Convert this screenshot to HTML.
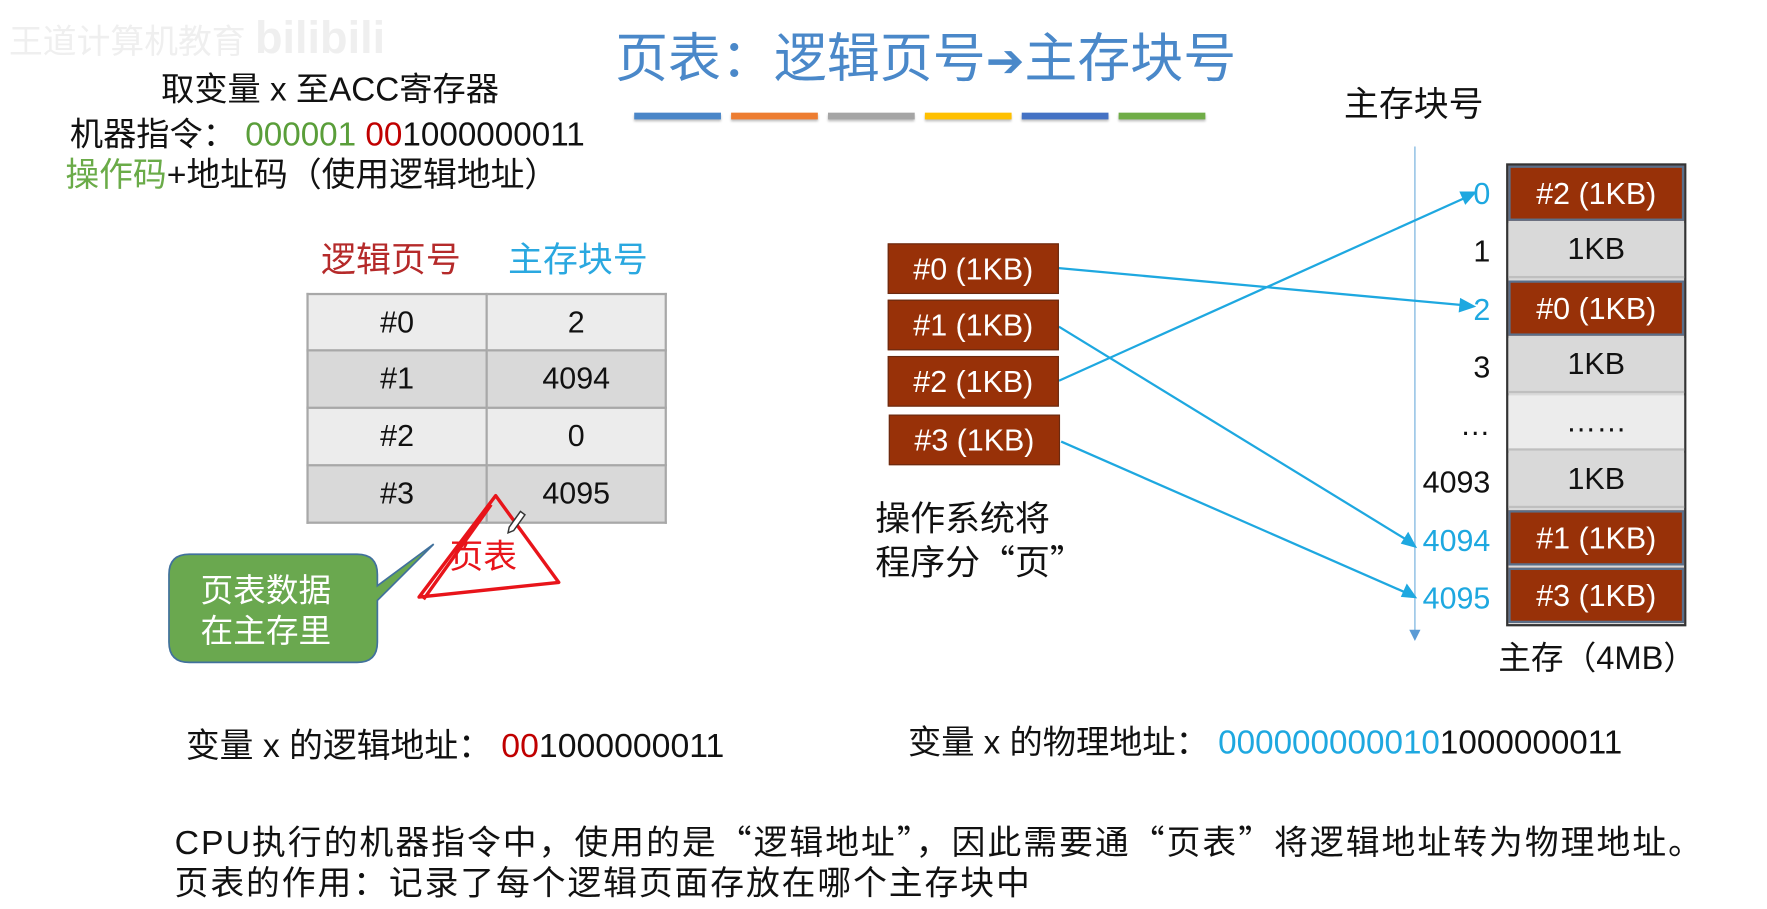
<!DOCTYPE html>
<html><head><meta charset="utf-8">
<style>
html,body{margin:0;padding:0;background:#fff;overflow:hidden;width:1767px;height:909px}
#s{position:absolute;left:0;top:0;width:1569px;height:807px;transform:scale(1.1265);transform-origin:0 0;font-family:"Liberation Sans","Noto Sans CJK SC",sans-serif;color:#111}
.t{position:absolute;white-space:nowrap;line-height:1}
.q{font-family:"Noto Sans CJK SC",sans-serif}
.bar{position:absolute;top:100px;height:6px;width:77px;box-shadow:0 2px 2px rgba(0,0,0,.25)}
.pg{position:absolute;left:788px;width:152px;height:45px;background:#983108;border:1px solid #6a2a10;color:#fff;font-size:27px;text-align:center;line-height:45px;box-sizing:border-box}
.cell{position:absolute;left:1339px;width:156px;height:49px;box-sizing:border-box;text-align:center;line-height:47px;font-size:27px}
.red{background:#983108;color:#fff;border:2px solid #5a6f8a}
.gry{background:#d9d9d9;border-bottom:2px solid #bfbfbf}
.lab{position:absolute;width:80px;left:1243px;text-align:right;font-size:27px;line-height:1}
.tb{position:absolute;left:272px;top:260px;border-collapse:collapse;font-size:27px}
.tb td{border:2px solid #a8a8a8;text-align:center;padding:0}
</style></head><body><div id="s">
<div class="t" style="left:8px;top:14px;font-size:30px;color:#efefef">王道计算机教育 <span style="font-size:40px;font-weight:bold">bilibili</span></div>
<div class="t" style="left:546px;top:28px;font-size:47px;color:#4a88c9">页表：逻辑页号<span style="font-family:'DejaVu Sans';font-size:41px">➔</span>主存块号</div>
<div class="bar" style="left:563px;background:#4a86c8"></div>
<div class="bar" style="left:649px;background:#ed7d31"></div>
<div class="bar" style="left:735px;background:#a5a5a5"></div>
<div class="bar" style="left:821px;background:#ffc000"></div>
<div class="bar" style="left:907px;background:#4472c4"></div>
<div class="bar" style="left:993px;background:#70ad47"></div>

<div class="t" style="left:143px;top:65px;font-size:29.5px">取变量 x 至ACC寄存器</div>
<div class="t" style="left:62px;top:105px;font-size:29.5px">机器指令： <span style="color:#5a9e3a">000001</span> <span style="color:#c00000">00</span>1000000011</div>
<div class="t" style="left:58px;top:141px;font-size:30px"><span style="color:#6aab48">操作码</span>+地址码（使用逻辑地址）</div>

<div class="t" style="left:285px;top:215px;font-size:31px;color:#b52a2a">逻辑页号</div>
<div class="t" style="left:451px;top:215px;font-size:31px;color:#2aa8e0">主存块号</div>
<table class="tb">
<tr style="height:50px;background:#ececec"><td style="width:157px">#0</td><td style="width:157px">2</td></tr>
<tr style="height:51px;background:#d9d9d9"><td>#1</td><td>4094</td></tr>
<tr style="height:51px;background:#ececec"><td>#2</td><td>0</td></tr>
<tr style="height:51px;background:#d9d9d9"><td>#3</td><td>4095</td></tr>
</table>

<svg style="position:absolute;left:0;top:0" width="1569" height="807">
<path d="M150 510 q0-18 18-18 h149 q18 0 18 18 v10 l50-37 l-50 50 v37 q0 18-18 18 h-149 q-18 0-18-18 z" fill="#6aa84f" stroke="#41719c" stroke-width="1.5"/>
<path d="M440 440 L496 517 L372 530 Z M436 448 L376 532" fill="none" stroke="#e8141a" stroke-width="3" stroke-linejoin="round"/>
<path d="M452 468 l10-14 l4 3 l-10 14 l-5 2 z" fill="#fff" stroke="#333" stroke-width="1.3"/>
<line x1="1256" y1="130" x2="1256" y2="560" stroke="#9ec8e8" stroke-width="1.5"/>
<path d="M1251 559 l5 10 l5-10 z" fill="#5b9bd5"/>
<g stroke="#1ea8e0" stroke-width="2" fill="#1ea8e0">
<line x1="940" y1="238" x2="1300" y2="271"/><path d="M1308 272 l-11 -6 l-1 10 z"/>
<line x1="940" y1="290" x2="1250" y2="480"/><path d="M1256 485 l-6-11 l-5 8 z"/>
<line x1="940" y1="338" x2="1302" y2="175"/><path d="M1309 171 l-12 0 l4 9 z"/>
<line x1="942" y1="392" x2="1250" y2="527"/><path d="M1256 530 l-7-10 l-4 9 z"/>
</g>
</svg>
<div class="t" style="left:178px;top:507px;font-size:29px;color:#fff;line-height:36px">页表数据<br>在主存里</div>
<div class="t" style="left:399px;top:480px;font-size:30px;color:#e8141a">页表</div>

<div class="pg" style="top:216px">#0 (1KB)</div>
<div class="pg" style="top:266px">#1 (1KB)</div>
<div class="pg" style="top:316px">#2 (1KB)</div>
<div class="pg" style="top:368px;left:789px">#3 (1KB)</div>
<div class="t" style="left:777px;top:443px;font-size:31px;line-height:36px">操作系统将<br>程序分<span class="q">“</span>页<span class="q">”</span></div>

<div class="t" style="left:1193px;top:77px;font-size:31px">主存块号</div>
<div class="lab" style="top:159px;color:#1ea8e0">0</div>
<div class="lab" style="top:210px">1</div>
<div class="lab" style="top:262px;color:#1ea8e0">2</div>
<div class="lab" style="top:313px">3</div>
<div class="lab" style="top:364px">…</div>
<div class="lab" style="top:415px">4093</div>
<div class="lab" style="top:467px;color:#1ea8e0">4094</div>
<div class="lab" style="top:518px;color:#1ea8e0">4095</div>
<div style="position:absolute;left:1337px;top:145px;width:160px;height:411px;border:2px solid #333;box-sizing:border-box;background:#d9d9d9"></div>
<div class="cell red" style="top:147px">#2 (1KB)</div>
<div class="cell gry" style="top:198px">1KB</div>
<div class="cell red" style="top:249px">#0 (1KB)</div>
<div class="cell gry" style="top:300px">1KB</div>
<div class="cell gry" style="top:351px;background:#ececec">……</div>
<div class="cell gry" style="top:402px">1KB</div>
<div class="cell red" style="top:453px">#1 (1KB)</div>
<div class="cell red" style="top:504px">#3 (1KB)</div>
<div class="t" style="left:1330px;top:571px;font-size:29px">主存（4MB）</div>

<div class="t" style="left:165px;top:648px;font-size:30px">变量 x 的逻辑地址： <span style="color:#c00000">00</span>1000000011</div>
<div class="t" style="left:806px;top:645px;font-size:29.5px">变量 x 的物理地址： <span style="color:#1ea8e0">000000000010</span>1000000011</div>
<div class="t" style="left:155px;top:730px;font-size:30px;letter-spacing:1.8px">CPU执行的机器指令中，使用的是<span class="q">“</span>逻辑地址<span class="q">”</span>，因此需要通<span class="q">“</span>页表<span class="q">”</span>将逻辑地址转为物理地址。</div>
<div class="t" style="left:155px;top:770px;font-size:30px;letter-spacing:1.7px">页表的作用：记录了每个逻辑页面存放在哪个主存块中</div>
</div></body></html>
